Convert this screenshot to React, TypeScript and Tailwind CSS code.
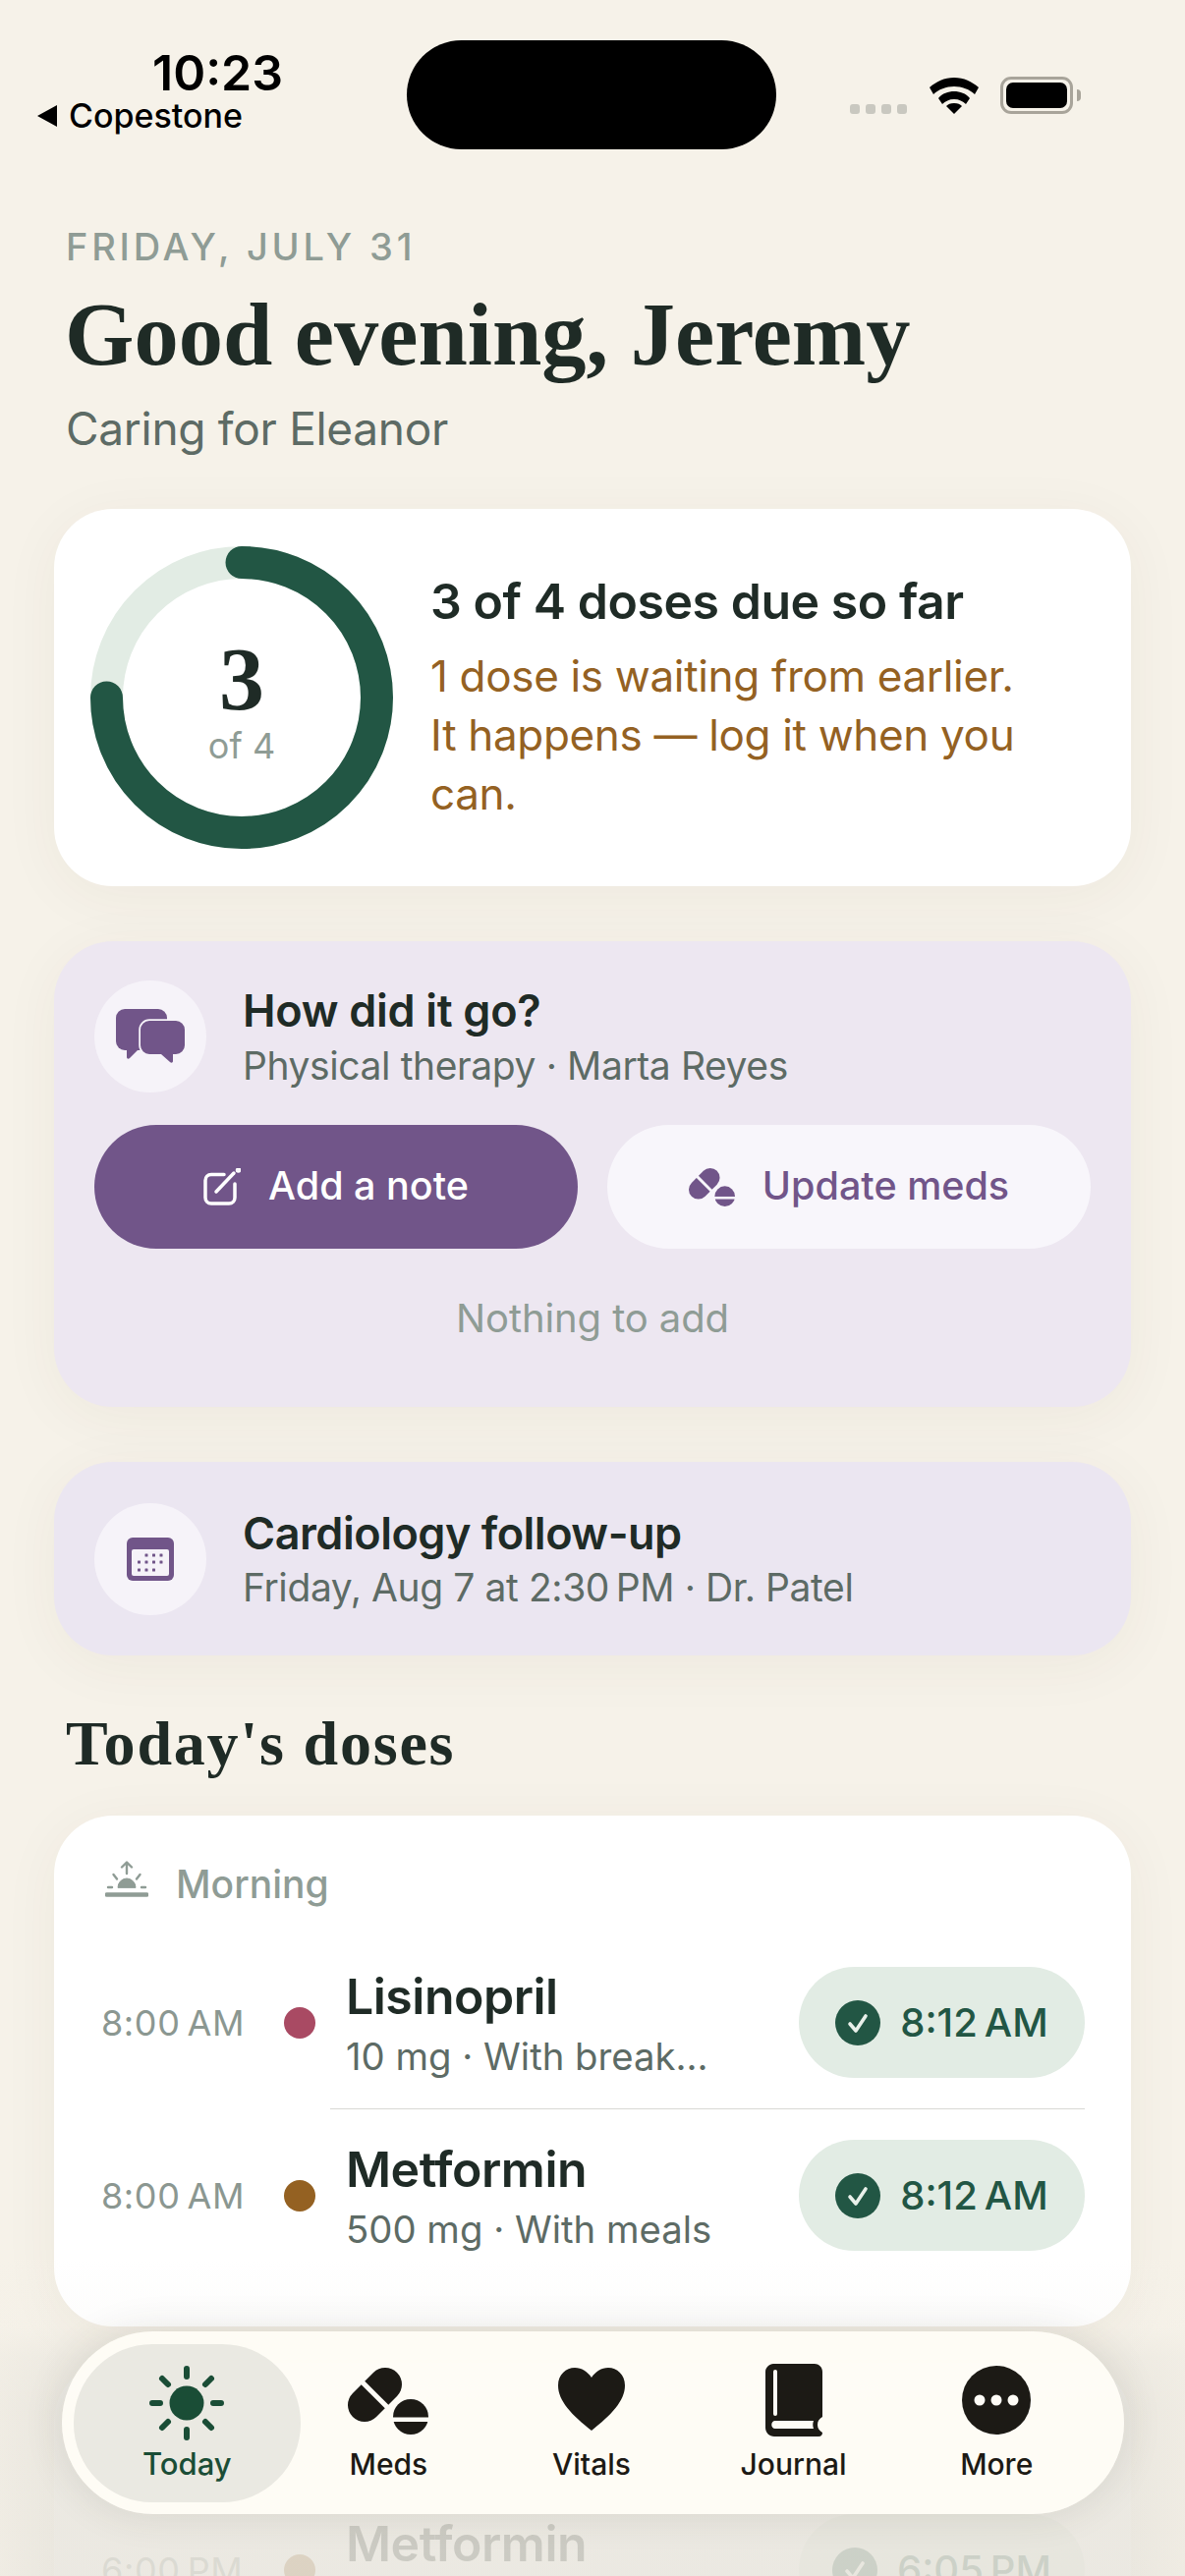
const SANS = "font-['Inter','Liberation_Sans',sans-serif]";
const CARD_SHADOW = "shadow-[0_10px_60px_rgba(70,60,40,0.05)]";

function Ring() {
  return (
    <svg viewBox="0 0 308 308" className="w-[308px] h-[308px] shrink-0">
      <circle cx="154" cy="154" r="137.5" fill="none" stroke="#e2ece4" strokeWidth="33" />
      <path d="M154 16.5A137.5 137.5 0 1 1 16.5 154" fill="none" stroke="#225644" strokeWidth="33" strokeLinecap="round" />
    </svg>
  );
}

function Chats() {
  return (
    <svg viewBox="0 0 70 56" className="w-[70px] h-[56px] overflow-visible" fill="#715589">
      <rect width="52" height="42" rx="9" />
      <path d="M11 40v9c0 2 2 2 3 1l10-10z" />
      <path
        d="M34 12h27a9 9 0 0 1 9 9v16a9 9 0 0 1-9 9h-3v7c0 2-2 2-3 1l-9-8H34a9 9 0 0 1-9-9V21a9 9 0 0 1 9-9z"
        stroke="#f6f3f9"
        strokeWidth="3.5"
        paintOrder="stroke"
      />
    </svg>
  );
}

function Note() {
  return (
    <svg viewBox="0 0 38 38" className="w-[38px] h-[38px]" fill="none" stroke="#fff" strokeWidth="3.5" strokeLinecap="round">
      <path d="M21 6.5H8c-3.500 0-6 2.500-6 6V30c0 3.500 2.500 6 6 6h18c3.500 0 6-2.500 6-6V16" />
      <path d="M13 24L31 5" />
      <circle cx="35.500" cy="2" r="1" fill="#fff" />
    </svg>
  );
}

// capsule + split round tablet, same shape for the button and the tab bar
function Pills({ className, fill, gap }: { className: string; fill: string; gap: string }) {
  return (
    <svg viewBox="0 0 82 68" className={className} fill={fill}>
      <g transform="rotate(-45 27.500 27.500)">
        <rect x="-4.350" y="10.500" width="63.700" height="34" rx="17" />
        <rect x="25" y="8" width="5" height="39" fill={gap} />
      </g>
      <circle cx="64" cy="50" r="18" />
      <rect x="44" y="50.500" width="40" height="4.500" fill={gap} />
    </svg>
  );
}

function Calendar() {
  const dots = [
    [20, 18], [27.5, 18], [35, 18],
    [12.5, 25], [20, 25], [27.5, 25], [35, 25],
    [12.5, 33], [20, 33], [27.5, 33],
  ];
  return (
    <svg viewBox="0 0 48 44" className="w-[48px] h-[44px]">
      <rect width="48" height="44" rx="6" fill="#715589" />
      <rect x="5" y="12" width="38" height="27" rx="2" fill="#f5f2f8" />
      {dots.map(([x, y]) => (
        <rect key={`${x}-${y}`} x={x - 1.500} y={y - 1.500} width="3" height="3" rx="0.500" fill="#715589" />
      ))}
    </svg>
  );
}

function Sunrise() {
  return (
    <svg viewBox="0 0 44 37" className="w-[44px] h-[37px] shrink-0" fill="none" stroke="#8f9c95" strokeWidth="2.400" strokeLinecap="round" strokeLinejoin="round">
      <path d="M22 13V2M17 6.500L22 1.500l5 5" />
      <path d="M8.500 14l3.500 4.500M35.500 14L32 18.500" />
      <path d="M13 27a9 9 0 0 1 18 0z" fill="#8f9c95" strokeWidth="1" />
      <path d="M3 27h4M37 27h4" />
      <path d="M1.500 34.500h41" strokeWidth="4.500" />
    </svg>
  );
}

function Check() {
  return (
    <svg viewBox="0 0 46 46" className="w-[46px] h-[46px] shrink-0">
      <circle cx="23" cy="23" r="23" fill="#225644" />
      <path d="M15 24l6 7 10-15" fill="none" stroke="#e9f0ea" strokeWidth="3.600" strokeLinecap="round" strokeLinejoin="round" />
    </svg>
  );
}

function DoseRow({ time, dot, name, sub, taken }: { time: string; dot: string; name: string; sub: string; taken: string }) {
  return (
    <div className="flex items-center h-[175px] pl-[48px] pr-[47px]">
      <span className="w-[186px] text-[36px] text-[#8b9791] tracking-[0.6px]">{time}</span>
      <span className="w-[32px] h-[32px] rounded-full shrink-0" style={{ backgroundColor: dot }} />
      <div className="ml-[31px] flex-1 min-w-0">
        <div className="text-[50px] leading-[60px] tracking-[-0.5px] font-semibold text-[#1f2b26]">{name}</div>
        <div className="mt-[8px] text-[38.3px] leading-[46px] text-[#5d6b65] truncate">{sub}</div>
      </div>
      <div className="w-[291px] h-[113px] rounded-full bg-[#e2ece4] flex items-center justify-center gap-[20px] shrink-0">
        <Check />
        <span className="text-[40px] font-medium text-[#225644]">{taken}</span>
      </div>
    </div>
  );
}

function TabBar() {
  const ink = "#1c1a15";
  return (
    <nav className="absolute left-[63px] top-[2373px] w-[1081px] h-[186px] rounded-[93px] bg-[#fefcf6]/97 shadow-[0_0_40px_rgba(60,55,40,0.12)] flex items-center px-[12px]">
      <div className="w-[231px] h-[161px] rounded-[80px] bg-[#eae9e2] flex flex-col items-center">
        <svg viewBox="0 0 76 76" className="w-[76px] h-[76px] mt-[22px]" stroke="#1a4d36" strokeWidth="6" strokeLinecap="round" fill="#1a4d36">
          <circle cx="38" cy="38" r="17.500" stroke="none" />
          <path d="M38 3v8M38 65v8M3 38h8M65 38h8M13 13l6 6M57 57l6 6M13 63l6-6M57 19l6-6" />
        </svg>
        <span className="text-[31px] leading-[36px] mt-[6px] font-medium text-[#1a4d36]">Today</span>
      </div>
      <div className="w-[180px] flex flex-col items-center">
        <Pills className="w-[82px] h-[68px] mt-[4px]" fill={ink} gap="#fefcf6" />
        <span className="text-[30px] leading-[36px] mt-[12px] font-medium" style={{ color: ink }}>Meds</span>
      </div>
      <div className="w-[234px] flex flex-col items-center">
        <svg viewBox="0 0 68 64" className="w-[68px] h-[64px] mt-[4px]" fill={ink}>
          <path d="M34 64C14 48 0 34 0 18 0 7 8 0 17 0c7 0 13 4 17 10C38 4 44 0 51 0c9 0 17 7 17 18 0 16-14 30-34 46z" />
        </svg>
        <span className="text-[30px] leading-[36px] mt-[16px] font-medium" style={{ color: ink }}>Vitals</span>
      </div>
      <div className="w-[178px] flex flex-col items-center">
        <svg viewBox="0 0 58 74" className="w-[58px] h-[74px]">
          <path d="M8 0h42c4 0 8 3 8 8v46c-3 2-5 4-5 8s2 6 5 8c0 2-1 4-4 4H9c-5 0-9-4-9-9V8c0-4 4-8 8-8z" fill={ink} />
          <rect x="8" y="6" width="4" height="47" rx="2" fill="#fefcf6" />
          <path d="M10 58h39c-1 3-1 5 0 8H10c-5 0-5-8 0-8z" fill="#fefcf6" />
        </svg>
        <span className="text-[30px] leading-[36px] mt-[10px] font-medium" style={{ color: ink }}>Journal</span>
      </div>
      <div className="w-[236px] flex flex-col items-center">
        <svg viewBox="0 0 70 70" className="w-[70px] h-[70px] mt-[2px]">
          <circle cx="35" cy="35" r="35" fill={ink} />
          <circle cx="18" cy="35" r="5.500" fill="#fefcf6" />
          <circle cx="35" cy="35" r="5.500" fill="#fefcf6" />
          <circle cx="52" cy="35" r="5.500" fill="#fefcf6" />
        </svg>
        <span className="text-[30px] leading-[36px] mt-[12px] font-medium" style={{ color: ink }}>More</span>
      </div>
    </nav>
  );
}

export default function App() {
  return (
    <div className={`relative w-[1206px] h-[2622px] overflow-hidden bg-[#f6f2e9] ${SANS}`}>
      {/* Status bar */}
      <div className="relative h-[229px]">
        <div className="absolute left-[155px] top-[45px] text-[50px] leading-[58px] font-semibold text-black">10:23</div>
        <div className="absolute left-[38px] top-[98px] flex items-center gap-[12px] text-[34px] leading-[40px] font-medium text-black">
          <span className="w-0 h-0 border-y-[11px] border-y-transparent border-r-[20px] border-r-black" />
          Copestone
        </div>
        <div className="absolute left-[414px] top-[41px] w-[376px] h-[111px] rounded-[56px] bg-black" />
        <div className="absolute left-[865px] top-[106px] flex gap-[6px]">
          <span className="w-[10px] h-[10px] rounded-[3px] bg-[#c9c8c0]" />
          <span className="w-[10px] h-[10px] rounded-[3px] bg-[#c9c8c0]" />
          <span className="w-[10px] h-[10px] rounded-[3px] bg-[#c9c8c0]" />
          <span className="w-[10px] h-[10px] rounded-[3px] bg-[#c9c8c0]" />
        </div>
        <svg viewBox="0 0 50 37" className="absolute left-[946px] top-[79px] w-[50px] h-[37px]">
          <path d="M25 0c10 0 18 4 25 10l-4 7c-5-5-13-8-21-8S9 12 4 17L0 10C7 4 15 0 25 0z" />
          <path d="M25 14c6 0 12 2 16 7l-4 6c-3-3-7-5-12-5s-9 2-12 5l-4-6c4-5 10-7 16-7z" />
          <path d="M25 26c4 0 6 1 8 3l-8 8-8-8c2-2 4-3 8-3z" />
        </svg>
        <div className="absolute left-[1018px] top-[78px] w-[74px] h-[38px] rounded-[11px] border-[3px] border-[#a8a49a] p-[3px]">
          <div className="w-full h-full rounded-[7px] bg-black" />
        </div>
        <div className="absolute left-[1096px] top-[91px] w-[4px] h-[12px] rounded-r-full bg-[#a8a49a]" />
      </div>

      {/* Header */}
      <div className="px-[67px]">
        <div className="text-[38px] leading-[44px] font-medium tracking-[3.8px] text-[#8f9c95]">FRIDAY, JULY 31</div>
        <h1 className="mt-[18px] -ml-[1px] text-[90.5px] leading-[100px] font-bold text-[#1f2b26] font-['Liberation_Serif',serif]">Good evening, Jeremy</h1>
        <div className="mt-[18px] text-[46px] leading-[54px] tracking-[-0.3px] text-[#5d6b65]">Caring for Eleanor</div>
      </div>

      <div className="mx-[55px] mt-[55px] flex flex-col">
        {/* Progress */}
        <section className={`h-[384px] rounded-[60px] bg-white ${CARD_SHADOW} flex items-center pl-[37px]`}>
          <div className="relative w-[308px] h-[308px] shrink-0">
            <Ring />
            <div className="absolute inset-0 flex flex-col items-center justify-center pt-[5px]">
              <span className="text-[92px] leading-[92px] font-bold text-[#1f2b26] font-['Liberation_Serif',serif]">3</span>
              <span className="text-[36px] leading-[44px] text-[#8f9c95]">of 4</span>
            </div>
          </div>
          <div className="ml-[38px]">
            <div className="text-[50px] leading-[60px] tracking-[-0.45px] font-semibold text-[#1f2b26]">3 of 4 doses due so far</div>
            <div className="mt-[16px] text-[44px] leading-[60px] tracking-[-0.33px] text-[#946122] w-[620px]">1 dose is waiting from earlier. It happens — log it when you can.</div>
          </div>
        </section>

        {/* Visit follow-up */}
        <section className={`mt-[56px] h-[474px] rounded-[60px] bg-[#ede7f1] ${CARD_SHADOW} px-[41px] pt-[40px]`}>
          <div className="flex items-center">
            <div className="w-[114px] h-[114px] rounded-full bg-[#f6f3f9] flex items-center justify-center shrink-0">
              <Chats />
            </div>
            <div className="ml-[37px]">
              <div className="text-[45px] leading-[58px] tracking-[-0.3px] font-semibold text-[#1f2b26]">How did it go?</div>
              <div className="mt-[1px] text-[39px] leading-[52px] tracking-[-0.4px] text-[#5d6b65]">Physical therapy · Marta Reyes</div>
            </div>
          </div>
          <div className="mt-[33px] flex gap-[30px]">
            <div className="flex-1 h-[126px] rounded-full bg-[#715589] flex items-center justify-center gap-[28px] text-[39.5px] font-medium text-white">
              <Note />
              Add a note
            </div>
            <div className="flex-1 h-[126px] rounded-full bg-[#f8f6fb] flex items-center justify-center gap-[28px] text-[39.5px] font-medium text-[#715589]">
              <Pills className="w-[47px] h-[39px]" fill="#715589" gap="#f8f6fb" />
              Update meds
            </div>
          </div>
          <div className="mt-[48px] text-center text-[40px] leading-[46px] tracking-[-0.1px] text-[#8f9c95]">Nothing to add</div>
        </section>

        {/* Next appointment */}
        <section className={`mt-[56px] h-[197px] rounded-[60px] bg-[#ebe6f1] ${CARD_SHADOW} flex items-center px-[41px]`}>
          <div className="w-[114px] h-[114px] rounded-full bg-[#f6f3f9] flex items-center justify-center shrink-0">
            <Calendar />
          </div>
          <div className="ml-[37px]">
            <div className="text-[45px] leading-[58px] tracking-[-0.5px] font-semibold text-[#1f2b26]">Cardiology follow-up</div>
            <div className="text-[39px] leading-[52px] tracking-[-0.4px] text-[#5d6b65]">{"Friday, Aug 7 at 2:30\u2009PM · Dr. Patel"}</div>
          </div>
        </section>

        <h2 className="ml-[12px] mt-[52px] h-[111px] text-[64px] leading-[76px] tracking-[1.8px] font-bold text-[#1f2b26] font-['Liberation_Serif',serif]">Today's doses</h2>

        {/* Doses */}
        <section className={`h-[520px] rounded-[60px] bg-white ${CARD_SHADOW}`}>
          <div className="h-[123px] pt-[46px] pl-[52px] flex items-start gap-[28px] text-[39px] leading-[48px] font-medium text-[#8f9c95]">
            <Sunrise />
            Morning
          </div>
          <DoseRow time={"8:00\u2009AM"} dot="#a94a63" name="Lisinopril" sub="10 mg · With break..." taken={"8:12\u2009AM"} />
          <div className="ml-[281px] mr-[47px] h-[1px] bg-[#d8d8d4]" />
          <DoseRow time={"8:00\u2009AM"} dot="#946122" name="Metformin" sub="500 mg · With meals" taken={"8:12\u2009AM"} />
        </section>

        {/* Next block, mostly under the tab bar */}
        <section className="mt-[37px] h-[520px] rounded-[60px] bg-white">
          <div className="h-[123px]" />
          <DoseRow time={"6:00\u2009PM"} dot="#946122" name="Metformin" sub="500 mg · With meals" taken={"6:05\u2009PM"} />
        </section>
      </div>

      {/* Fade behind the tab bar */}
      <div className="absolute inset-x-0 top-[2300px] bottom-0 bg-[linear-gradient(to_right,rgba(246,242,233,0.45),rgba(246,242,233,0)_60px,rgba(246,242,233,0)_1146px,rgba(246,242,233,0.45)),linear-gradient(to_bottom,rgba(232,229,221,0)_0px,rgba(232,229,221,0.1)_68px,rgba(232,229,221,0.6)_100px,rgba(232,229,221,0.86)_150px)]" />
      <TabBar />
    </div>
  );
}
